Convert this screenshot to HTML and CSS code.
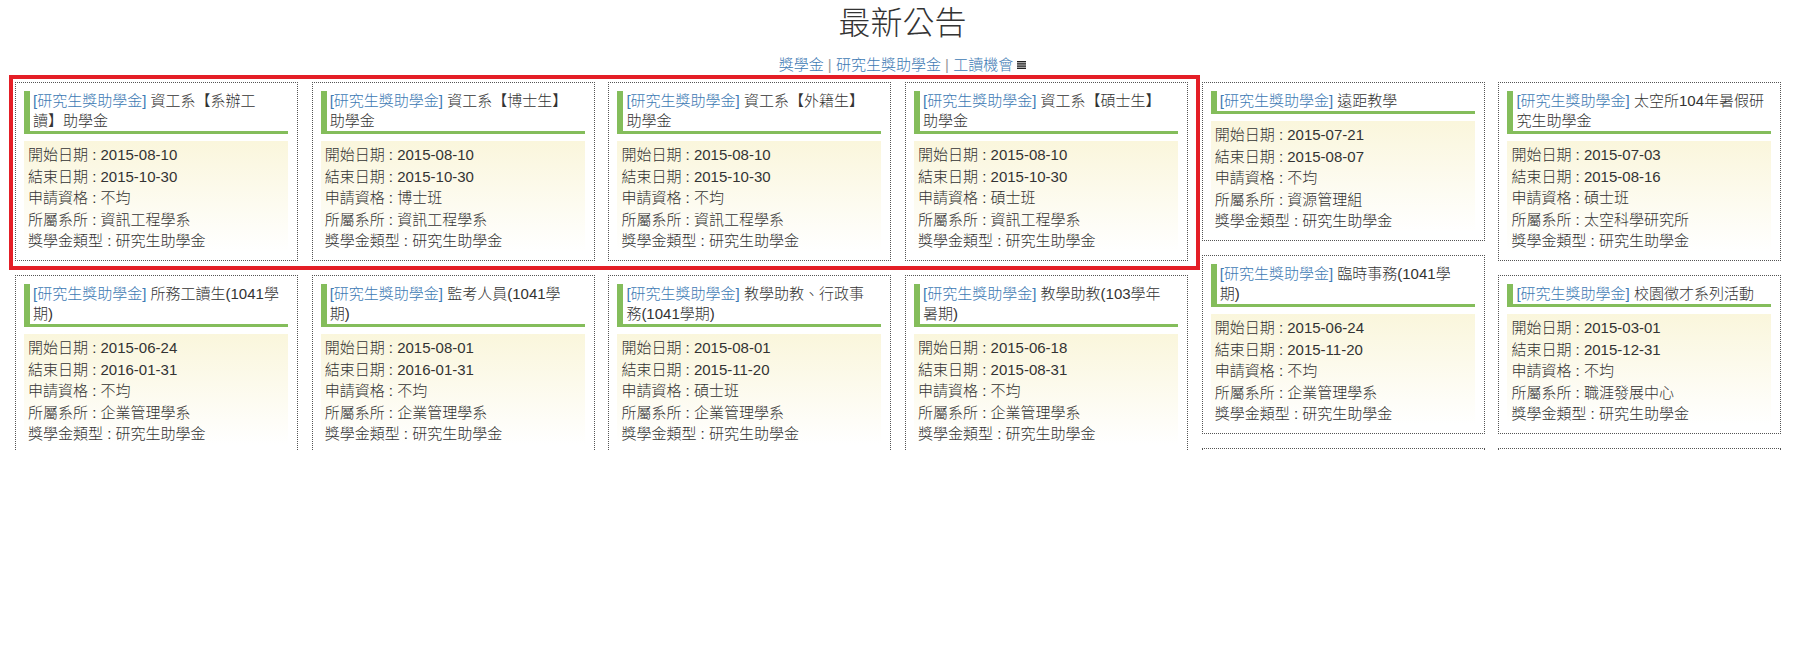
FILE: index.html
```html
<!DOCTYPE html>
<html lang="zh-Hant">

<head>
    <meta charset="UTF-8">
    <title>最新公告</title>
    <link rel="stylesheet" href="styles.css">
</head>

<body>
    <h1 class="page-title">最新公告</h1>
    <div class="nav">
        <a href="#">獎學金</a> <span class="sep">|</span>
        <a href="#">研究生獎助學金</a> <span class="sep">|</span>
        <a href="#">工讀機會</a>
        <svg class="list-icon" width="9" height="8" viewBox="0 0 9 8">
            <rect x="0" y="0" width="9" height="1.4" />
            <rect x="0" y="2.2" width="9" height="1.4" />
            <rect x="0" y="4.4" width="9" height="1.4" />
            <rect x="0" y="6.6" width="9" height="1.4" />
        </svg>
    </div>

    <div class="board">
        <div class="columns">
            <div class="col">
                <div class="card">
                    <h4 class="card-title"><a href="#">[研究生獎助學金]</a> 資工系【系辦工讀】助學金</h4>
                    <div class="card-body">
                        <div>開始日期 : 2015-08-10</div>
                        <div>結束日期 : 2015-10-30</div>
                        <div>申請資格 : 不均</div>
                        <div>所屬系所 : 資訊工程學系</div>
                        <div>獎學金類型 : 研究生助學金</div>
                    </div>
                </div>
                <div class="card">
                    <h4 class="card-title"><a href="#">[研究生獎助學金]</a> 所務工讀生(1041學期)</h4>
                    <div class="card-body">
                        <div>開始日期 : 2015-06-24</div>
                        <div>結束日期 : 2016-01-31</div>
                        <div>申請資格 : 不均</div>
                        <div>所屬系所 : 企業管理學系</div>
                        <div>獎學金類型 : 研究生助學金</div>
                    </div>
                </div>
            </div>

            <div class="col">
                <div class="card">
                    <h4 class="card-title"><a href="#">[研究生獎助學金]</a> 資工系【博士生】助學金</h4>
                    <div class="card-body">
                        <div>開始日期 : 2015-08-10</div>
                        <div>結束日期 : 2015-10-30</div>
                        <div>申請資格 : 博士班</div>
                        <div>所屬系所 : 資訊工程學系</div>
                        <div>獎學金類型 : 研究生助學金</div>
                    </div>
                </div>
                <div class="card">
                    <h4 class="card-title"><a href="#">[研究生獎助學金]</a> 監考人員(1041學期)</h4>
                    <div class="card-body">
                        <div>開始日期 : 2015-08-01</div>
                        <div>結束日期 : 2016-01-31</div>
                        <div>申請資格 : 不均</div>
                        <div>所屬系所 : 企業管理學系</div>
                        <div>獎學金類型 : 研究生助學金</div>
                    </div>
                </div>
            </div>

            <div class="col">
                <div class="card">
                    <h4 class="card-title"><a href="#">[研究生獎助學金]</a> 資工系【外籍生】助學金</h4>
                    <div class="card-body">
                        <div>開始日期 : 2015-08-10</div>
                        <div>結束日期 : 2015-10-30</div>
                        <div>申請資格 : 不均</div>
                        <div>所屬系所 : 資訊工程學系</div>
                        <div>獎學金類型 : 研究生助學金</div>
                    </div>
                </div>
                <div class="card">
                    <h4 class="card-title"><a href="#">[研究生獎助學金]</a> 教學助教、行政事務(1041學期)</h4>
                    <div class="card-body">
                        <div>開始日期 : 2015-08-01</div>
                        <div>結束日期 : 2015-11-20</div>
                        <div>申請資格 : 碩士班</div>
                        <div>所屬系所 : 企業管理學系</div>
                        <div>獎學金類型 : 研究生助學金</div>
                    </div>
                </div>
            </div>

            <div class="col">
                <div class="card">
                    <h4 class="card-title"><a href="#">[研究生獎助學金]</a> 資工系【碩士生】助學金</h4>
                    <div class="card-body">
                        <div>開始日期 : 2015-08-10</div>
                        <div>結束日期 : 2015-10-30</div>
                        <div>申請資格 : 碩士班</div>
                        <div>所屬系所 : 資訊工程學系</div>
                        <div>獎學金類型 : 研究生助學金</div>
                    </div>
                </div>
                <div class="card">
                    <h4 class="card-title"><a href="#">[研究生獎助學金]</a> 教學助教(103學年暑期)</h4>
                    <div class="card-body">
                        <div>開始日期 : 2015-06-18</div>
                        <div>結束日期 : 2015-08-31</div>
                        <div>申請資格 : 不均</div>
                        <div>所屬系所 : 企業管理學系</div>
                        <div>獎學金類型 : 研究生助學金</div>
                    </div>
                </div>
            </div>

            <div class="col">
                <div class="card">
                    <h4 class="card-title"><a href="#">[研究生獎助學金]</a> 遠距教學</h4>
                    <div class="card-body">
                        <div>開始日期 : 2015-07-21</div>
                        <div>結束日期 : 2015-08-07</div>
                        <div>申請資格 : 不均</div>
                        <div>所屬系所 : 資源管理組</div>
                        <div>獎學金類型 : 研究生助學金</div>
                    </div>
                </div>
                <div class="card">
                    <h4 class="card-title"><a href="#">[研究生獎助學金]</a> 臨時事務(1041學期)</h4>
                    <div class="card-body">
                        <div>開始日期 : 2015-06-24</div>
                        <div>結束日期 : 2015-11-20</div>
                        <div>申請資格 : 不均</div>
                        <div>所屬系所 : 企業管理學系</div>
                        <div>獎學金類型 : 研究生助學金</div>
                    </div>
                </div>
                <!-- next card, only its top edge shows above the fold -->
                <div class="card card-more"></div>
            </div>

            <div class="col">
                <div class="card">
                    <h4 class="card-title"><a href="#">[研究生獎助學金]</a> 太空所104年暑假研究生助學金</h4>
                    <div class="card-body">
                        <div>開始日期 : 2015-07-03</div>
                        <div>結束日期 : 2015-08-16</div>
                        <div>申請資格 : 碩士班</div>
                        <div>所屬系所 : 太空科學研究所</div>
                        <div>獎學金類型 : 研究生助學金</div>
                    </div>
                </div>
                <div class="card">
                    <h4 class="card-title"><a href="#">[研究生獎助學金]</a> 校園徵才系列活動</h4>
                    <div class="card-body">
                        <div>開始日期 : 2015-03-01</div>
                        <div>結束日期 : 2015-12-31</div>
                        <div>申請資格 : 不均</div>
                        <div>所屬系所 : 職涯發展中心</div>
                        <div>獎學金類型 : 研究生助學金</div>
                    </div>
                </div>
                <div class="card card-more"></div>
            </div>
        </div>

        <div class="highlight"></div>
    </div>
</body>

</html>
```

FILE: styles.css
```css
* {
    box-sizing: border-box;
}

body {
    margin: 0;
    background-color: #fff;
    color: #333;
    font-family: "Liberation Sans", "Noto Sans CJK TC", sans-serif;
    font-weight: 300;
    text-spacing-trim: space-all;
}

a {
    color: #3d7ab4;
    text-decoration: none;
}

.page-title {
    margin: 0;
    padding-top: 4px;
    font-size: 32px;
    line-height: 38px;
    font-weight: 300;
    text-align: center;
    color: #333;
}

.nav {
    margin-top: 13px;
    font-size: 15px;
    line-height: 20px;
    text-align: center;
}

.nav .sep {
    color: #999;
}

.list-icon {
    fill: #222;
    vertical-align: 1px;
}

.board {
    position: relative;
    margin-top: 7px;
}

.columns {
    display: flex;
    gap: 13.7px;
    padding-left: 15px;
    height: 368px;
    overflow: hidden;
}

.col {
    flex: none;
    width: 283px;
    display: flex;
    flex-direction: column;
    gap: 14.5px;
}

.card {
    border: 1px dotted #555;
    padding: 8px 9px 8px 8px;
    background-color: #fff;
}

.card-more {
    flex: none;
    height: 160px;
}

.card-title {
    margin: 0;
    padding: 0 6px 0 3px;
    border-left: 6px solid #84bd5b;
    border-bottom: 3px solid #84bd5b;
    font-size: 15px;
    line-height: 20px;
    font-weight: 300;
}

.card-body {
    margin-top: 7px;
    padding: 3px 4px 0;
    font-size: 15px;
    line-height: 21.5px;
    background: linear-gradient(#faf6dc, #fff);
}

.highlight {
    position: absolute;
    left: 9px;
    top: -7px;
    width: 1191px;
    height: 195px;
    border: 4px solid #e41e26;
    pointer-events: none;
}
```
